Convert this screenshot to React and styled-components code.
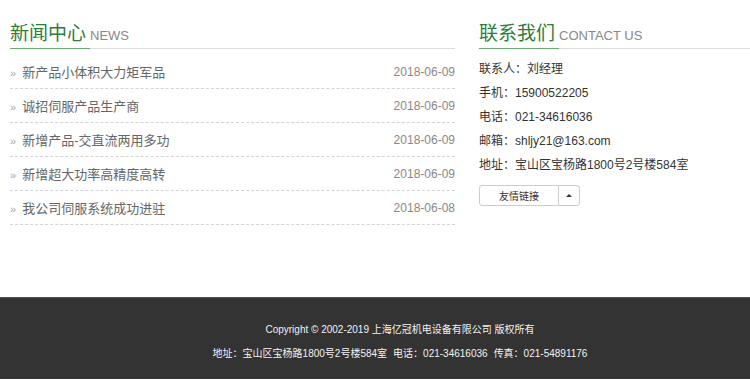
import React from "react";
import styled, { createGlobalStyle } from "styled-components";

const Global = createGlobalStyle`
  body {
    margin: 0;
    background: #fff;
    font-family: "Liberation Sans", "Noto Sans CJK SC", sans-serif;
  }
`;

const Main = styled.div`
  display: flex;
  gap: 24px;
  padding: 20px 0 72px 10px;
  overflow: hidden;
`;

const Column = styled.div`
  width: ${(p) => p.width};
  flex-shrink: 0;
`;

const Heading = styled.div`
  display: flex;
  align-items: flex-end;
  height: 28px;
  border-bottom: 1px solid #ddd;
`;

const Title = styled.span`
  font-size: 19px;
  line-height: 28px;
  padding-right: 4px;
  color: #2d7d3b;
  border-bottom: 1px solid #6aaa72;
  margin-bottom: -1px;
`;

const SubTitle = styled.span`
  font-size: 13px;
  color: #888;
  line-height: 24px;
`;

const List = styled.ul`
  list-style: none;
  margin: 6px 0 0;
  padding: 0;
`;

const Item = styled.li`
  display: flex;
  justify-content: space-between;
  align-items: center;
  height: 33px;
  border-bottom: 1px dashed #d4d4d4;
  font-size: 13px;
  color: #666;
`;

const Bullet = styled.span`
  color: #b0a878;
  font-size: 11px;
  margin-right: 6px;
`;

const Date = styled.span`
  color: #888;
  font-size: 12px;
`;

const Info = styled.div`
  margin-top: 8px;
`;

const Line = styled.div`
  font-size: 12px;
  line-height: 24px;
  color: #333;
`;

const Split = styled.div`
  display: inline-flex;
  margin-top: 8px;
  border: 1px solid #ccc;
  border-radius: 3px;
  height: 19px;
`;

const SplitLabel = styled.span`
  width: 78px;
  font-size: 10px;
  color: #333;
  display: flex;
  align-items: center;
  justify-content: center;
  border-right: 1px solid #ccc;
`;

const Caret = styled.span`
  width: 20px;
  display: flex;
  align-items: center;
  justify-content: center;
  &::after {
    content: "";
    border-left: 3px solid transparent;
    border-right: 3px solid transparent;
    border-bottom: 3px solid #333;
  }
`;

const Footer = styled.footer`
  background: #333;
  border-top: 1px solid #555;
  height: 82px;
  box-sizing: border-box;
  padding: 20px 0 0 50px;
  text-align: center;
  color: #f2f2f2;
  font-size: 10px;
  line-height: 24px;
`;

const Gap = styled.span`
  display: inline-block;
  width: 6px;
`;

const news = [
  ["新产品小体积大力矩军品", "2018-06-09"],
  ["诚招伺服产品生产商", "2018-06-09"],
  ["新增产品-交直流两用多功", "2018-06-09"],
  ["新增超大功率高精度高转", "2018-06-09"],
  ["我公司伺服系统成功进驻", "2018-06-08"],
];

const contact = [
  "联系人：刘经理",
  "手机：15900522205",
  "电话：021-34616036",
  "邮箱：shljy21@163.com",
  "地址：宝山区宝杨路1800号2号楼584室",
];

export default function App() {
  return (
    <>
      <Global />
      <Main>
        <Column width="445px">
          <Heading>
            <Title>新闻中心</Title>
            <SubTitle>NEWS</SubTitle>
          </Heading>
          <List>
            {news.map(([t, d]) => (
              <Item key={t}>
                <span>
                  <Bullet>»</Bullet>
                  {t}
                </span>
                <Date>{d}</Date>
              </Item>
            ))}
          </List>
        </Column>
        <Column width="400px">
          <Heading>
            <Title>联系我们</Title>
            <SubTitle>CONTACT US</SubTitle>
          </Heading>
          <Info>
            {contact.map((c) => (
              <Line key={c}>{c}</Line>
            ))}
          </Info>
          <Split>
            <SplitLabel>友情链接</SplitLabel>
            <Caret />
          </Split>
        </Column>
      </Main>
      <Footer>
        <div>Copyright © 2002-2019 上海亿冠机电设备有限公司 版权所有</div>
        <div>
          地址：宝山区宝杨路1800号2号楼584室<Gap />电话：021-34616036<Gap />传真：021-54891176
        </div>
      </Footer>
    </>
  );
}
